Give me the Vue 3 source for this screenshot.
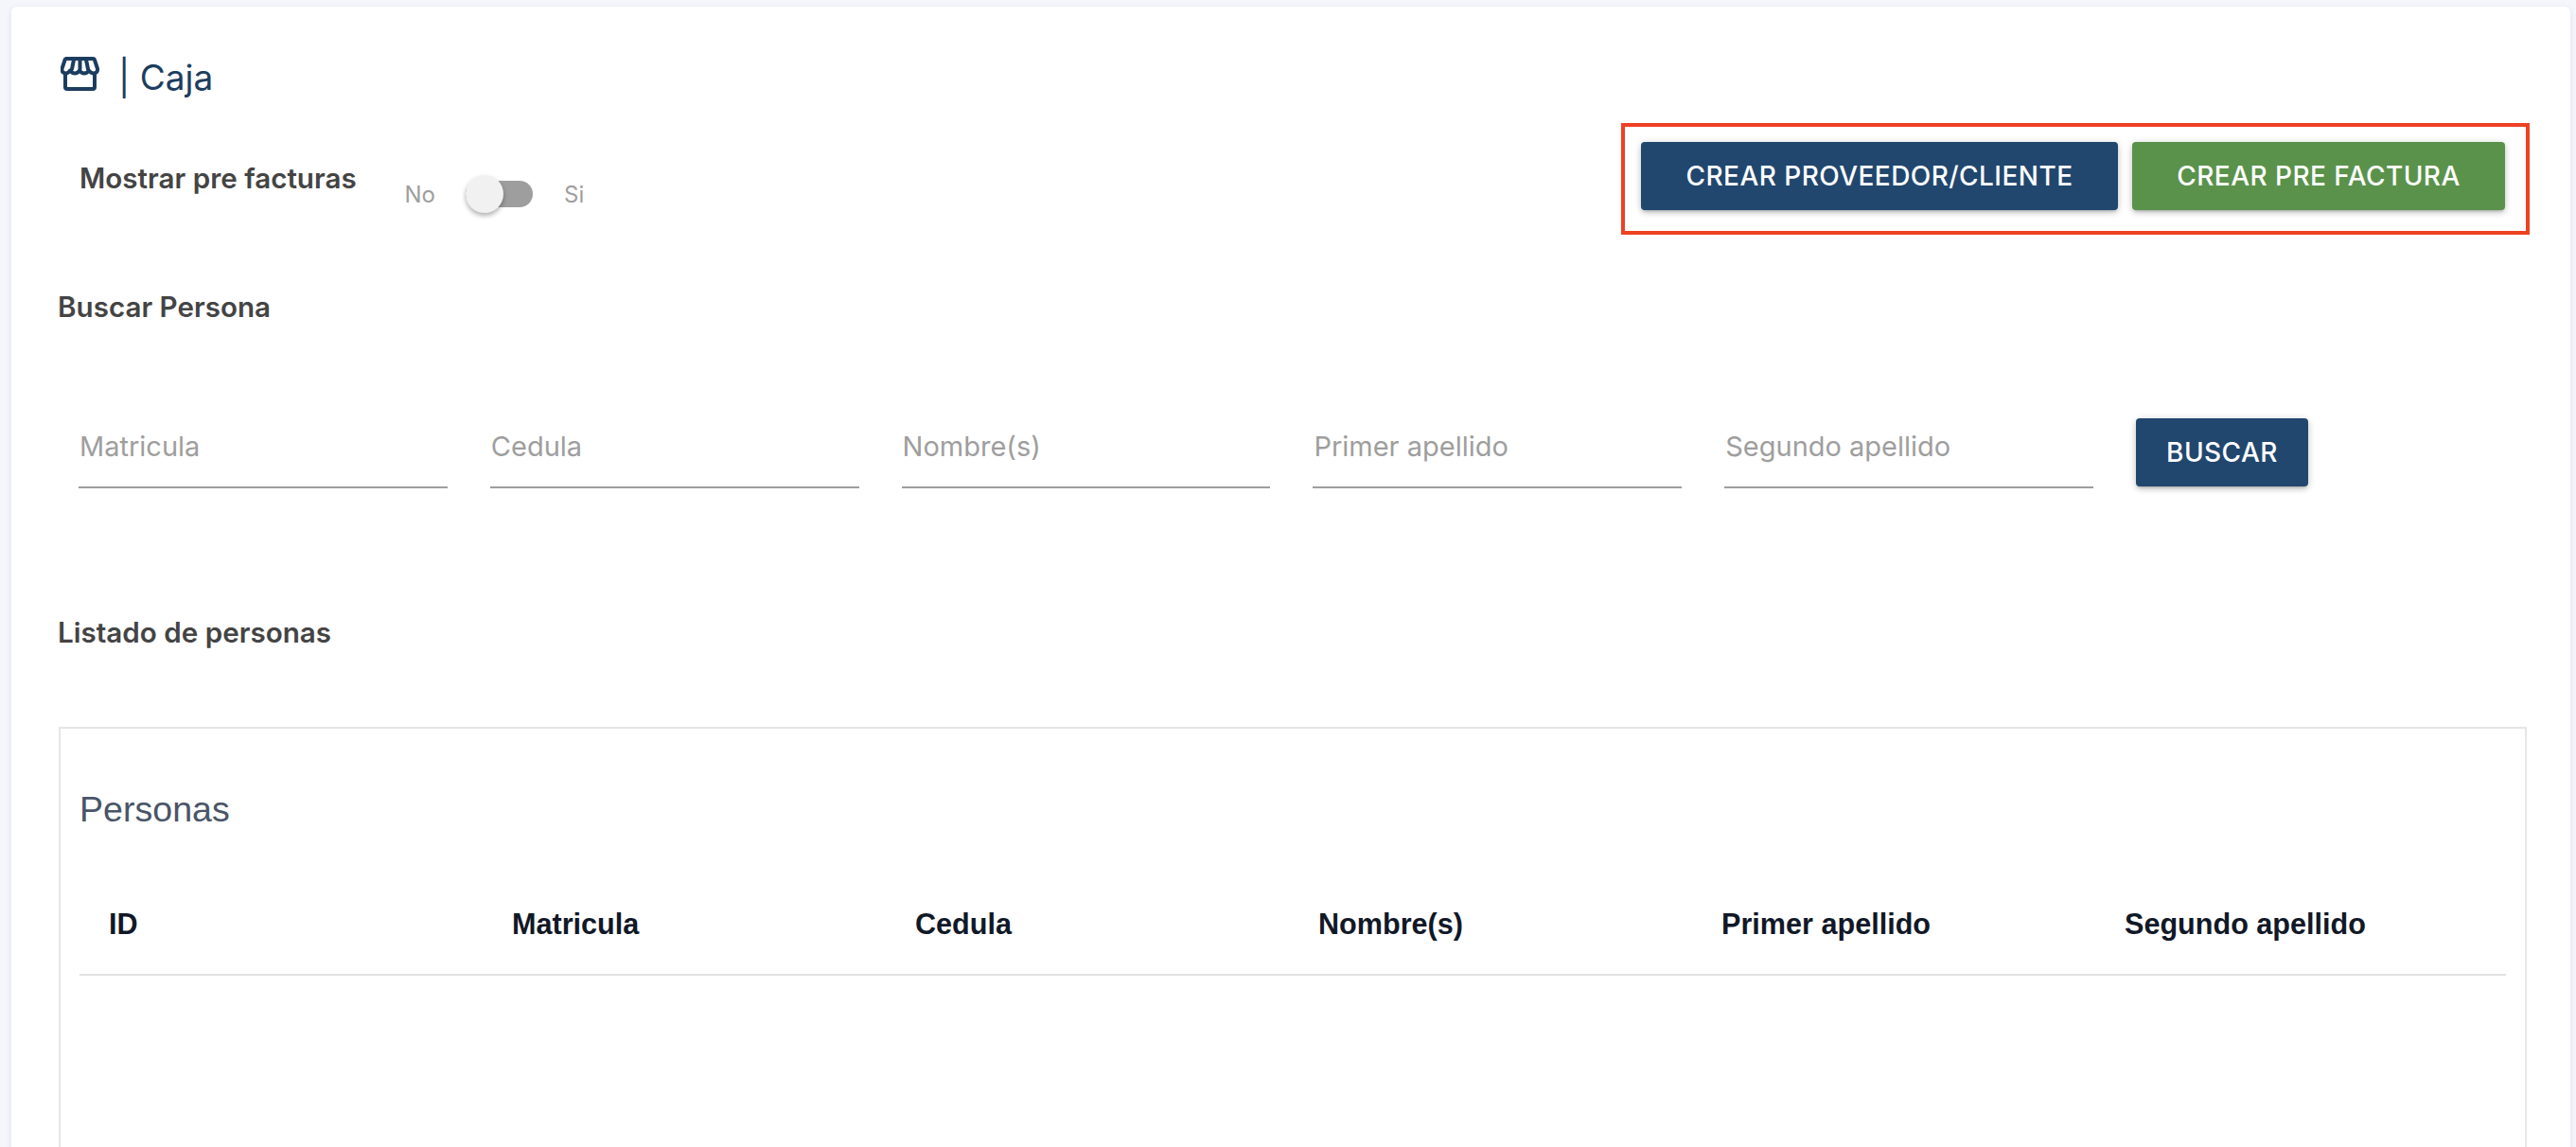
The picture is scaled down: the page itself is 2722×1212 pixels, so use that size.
<template>
  <div class="page">
    <main class="card">
      <h1 class="title">
        <svg class="store-icon" viewBox="0 0 41 36" fill="none" stroke="currentColor" stroke-width="4" stroke-linecap="round" stroke-linejoin="round">
          <path d="M7 2h27a2 2 0 0 1 2 1.500l3 9c.5 3-1.500 5-4 5s-4-1.500-5-3c-1 1.500-3 3-5 3s-4-1.500-5-3c-1 1.500-3 3-5 3s-4-1.500-5-3c-1 1.500-3 3-4.500 3-2.500 0-4.500-2-4-5l3-9A2 2 0 0 1 7 2z" />
          <path d="M14 3l-2 10M20.500 3v10M27 3l2 10" />
          <path d="M5 18v14a2 2 0 0 0 2 2h27a2 2 0 0 0 2-2V18" />
        </svg>
        <span>| Caja</span>
      </h1>

      <div class="toolbar">
        <div class="toggle-row">
          <span class="toggle-label">Mostrar pre facturas</span>
          <div class="switch-wrap">
            <span class="switch-text">No</span>
            <span class="switch">
              <span class="switch-thumb"></span>
            </span>
            <span class="switch-text">Si</span>
          </div>
        </div>
        <div class="actions">
          <button class="btn btn-blue btn-wide">CREAR PROVEEDOR/CLIENTE</button>
          <button class="btn btn-green">CREAR PRE FACTURA</button>
        </div>
      </div>

      <h2 class="section section-search">Buscar Persona</h2>
      <form class="search" @submit.prevent>
        <input v-for="f in fields" :key="f" class="field" type="text" :placeholder="f" />
        <button class="btn btn-blue btn-search">BUSCAR</button>
      </form>

      <h2 class="section section-list">Listado de personas</h2>
      <section class="table-card">
        <h3 class="table-title">Personas</h3>
        <div class="table-head">
          <span v-for="c in columns" :key="c">{{ c }}</span>
        </div>
      </section>
    </main>
  </div>
</template>

<script setup>
const fields = ["Matricula", "Cedula", "Nombre(s)", "Primer apellido", "Segundo apellido"];
const columns = ["ID", "Matricula", "Cedula", "Nombre(s)", "Primer apellido", "Segundo apellido"];
</script>

<style>
html,
body {
  margin: 0;
  background: #f5f6fb;
  overflow: hidden;
}
</style>

<style scoped>
.page {
  height: 1212px;
  padding: 7px 6px 0 12px;
  box-sizing: border-box;
  overflow: hidden;
  font-family: Inter, "Liberation Sans", sans-serif;
}
.card {
  height: 1240px;
  box-sizing: border-box;
  padding: 53px 46px 0 50px;
  background: #fff;
  border-radius: 6px;
  box-shadow: 0 2px 6px rgba(60, 70, 120, 0.12);
}
.title {
  display: flex;
  align-items: center;
  height: 36px;
  margin: 0 0 0 2px;
  color: #1c3d5f;
  font-size: 37px;
  font-weight: 400;
  line-height: 36px;
}
.store-icon {
  width: 41px;
  height: 36px;
  margin-right: 20px;
}
.title span {
  position: relative;
  top: 4px;
}
.toolbar {
  display: flex;
  justify-content: space-between;
  height: 118px;
  margin: 34px -3px 0 0;
}
.toggle-row {
  display: flex;
  padding: 38px 0 0 22px;
}
.toggle-label {
  width: 343.5px;
  color: #444;
  font-size: 29.6px;
  font-weight: 600;
  line-height: 40px;
}
.switch-wrap {
  display: flex;
  align-items: center;
  height: 40px;
  margin-top: 17px;
  color: #9e9e9e;
}
.switch-text {
  font-size: 24px;
}
.switch {
  position: relative;
  display: block;
  width: 71px;
  height: 28px;
  margin: 0 33px 0 32px;
  border-radius: 14px;
  background: #9e9e9e;
}
.switch-thumb {
  position: absolute;
  top: -6px;
  left: 0;
  width: 40px;
  height: 40px;
  border-radius: 50%;
  background: #f1f1f1;
  box-shadow: 0 3px 5px rgba(0, 0, 0, 0.3);
}
.actions {
  display: flex;
  gap: 15px;
  box-sizing: border-box;
  padding: 16px 22px 0 17px;
  border: 4px solid #ee4123;
}
.btn {
  height: 72px;
  padding: 0;
  border: 0;
  border-radius: 4px;
  color: #fff;
  font-family: inherit;
  font-size: 28px;
  font-weight: 500;
  letter-spacing: 0.45px;
  box-shadow: 0 3px 3px -2px rgba(0, 0, 0, 0.2), 0 3px 6px rgba(0, 0, 0, 0.14), 0 1px 10px rgba(0, 0, 0, 0.12);
}
.btn-blue {
  background: #21476f;
}
.btn-green {
  width: 394px;
  background: #5a924c;
}
.btn-wide {
  width: 504px;
}
.section {
  margin: 0 0 0 -1px;
  color: #444;
  font-size: 29.6px;
  font-weight: 600;
  line-height: 40px;
}
.section-search {
  margin-top: 56px;
}
.search {
  display: flex;
  align-items: flex-start;
  gap: 45px;
  margin: 98px 0 0 21px;
}
.field {
  width: 389.8px;
  height: 74px;
  box-sizing: border-box;
  padding: 0 0 14px 1px;
  border: 0;
  border-bottom: 2px solid #9e9e9e;
  outline: 0;
  background: transparent;
  font-family: inherit;
  font-size: 29px;
}
.field::placeholder {
  color: #9e9e9e;
  opacity: 1;
}
.btn-search {
  width: 182px;
}
.section-list {
  margin-top: 132px;
}
.table-card {
  height: 600px;
  box-sizing: border-box;
  margin: 80px 0 0 0;
  padding: 0 20px;
  border: 2px solid #e6e6e6;
  width: 2608px;
}
.table-title {
  margin: 63px 0 0 0;
  color: #4a5568;
  font-family: "Liberation Sans", Arial, sans-serif;
  font-size: 37.6px;
  font-weight: 400;
  line-height: 44px;
}
.table-head {
  display: grid;
  grid-template-columns: repeat(6, 426px);
  align-items: center;
  box-sizing: border-box;
  height: 154px;
  padding: 46px 0 0 31px;
  border-bottom: 2px solid #e2e2e2;
  color: #111827;
  font-family: "Liberation Sans", Arial, sans-serif;
  font-size: 30.6px;
  font-weight: 700;
}
</style>
